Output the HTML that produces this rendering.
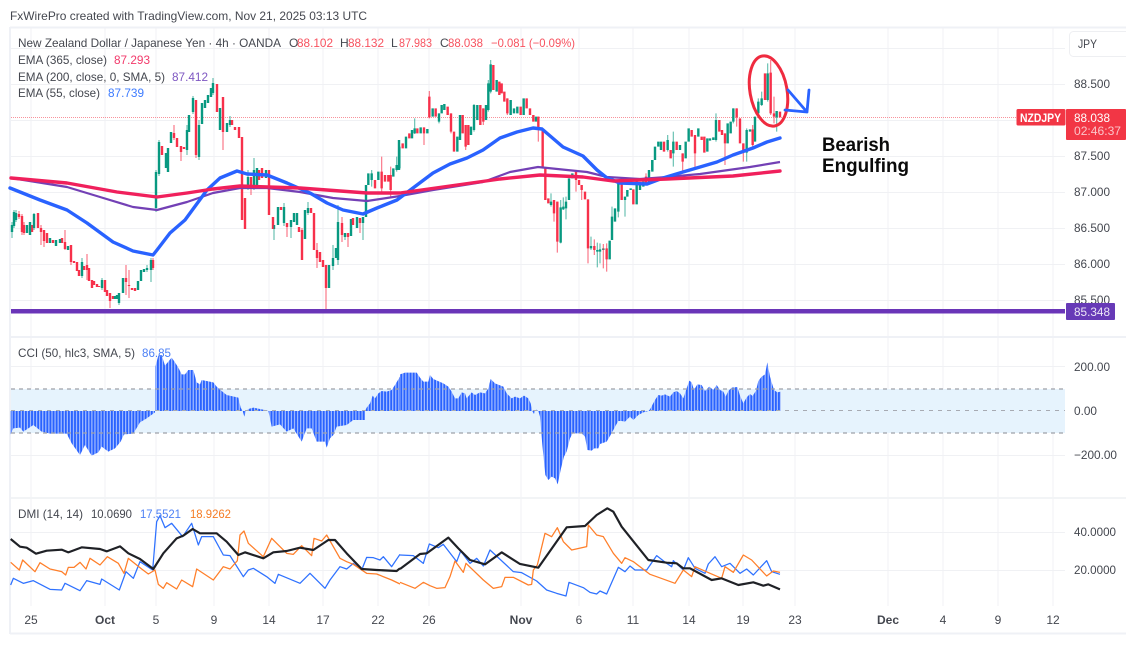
<!DOCTYPE html>
<html><head><meta charset="utf-8"><title>NZDJPY</title>
<style>
html,body{margin:0;padding:0;background:#fff}
svg{display:block;filter:blur(.35px)}
text{font-family:"Liberation Sans",sans-serif;font-size:12px;fill:#44474f}
.r{fill:#f7525f}
.rb{stroke:#f7314b;stroke-width:7.2;fill:none}
.gb{stroke:#089981;stroke-width:7.2;fill:none}
.rw{stroke:#f7314b;stroke-width:3.6;fill:none;opacity:.65}
.gw{stroke:#089981;stroke-width:3.6;fill:none;opacity:.6}
.rbp{stroke:#f7314b;stroke-width:2.4;fill:none}
.gbp{stroke:#089981;stroke-width:2.4;fill:none}
.rwp{stroke:#f7314b;stroke-width:1.2;fill:none;opacity:.65}
.gwp{stroke:#089981;stroke-width:1.2;fill:none;opacity:.6}
</style></head><body>
<svg width="1126" height="650" viewBox="0 0 1126 650" xmlns="http://www.w3.org/2000/svg">
<defs>
<pattern id="b" patternUnits="userSpaceOnUse" width="9.21" height="30"><rect width="9.21" height="30" fill="#b4c9ff"/><rect x="1" width="6" height="30" fill="#2962ff"/></pattern>
</defs>
<rect width="1126" height="650" fill="#fff"/>
<text x="10" y="20" textLength="357" lengthAdjust="spacingAndGlyphs">FxWirePro created with TradingView.com, Nov 21, 2025 03:13 UTC</text>

<!-- frame -->
<path d="M10 27.500H1126M10 27V634M10 337H1126M10 633.500H1126" stroke="#eff1f6" stroke-width="2" fill="none"/>
<path d="M11 498H1126" stroke="#e6e8ee" stroke-width="1"/>
<!-- grid -->
<path d="M31 28V336M105 28V336M156 28V336M214 28V336M269 28V336M323 28V336M378 28V336M429 28V336M521 28V336M579 28V336M633 28V336M689 28V336M743 28V336M795 28V336M888 28V336M943 28V336M998 28V336M1053 28V336
M31 338V497M105 338V497M156 338V497M214 338V497M269 338V497M323 338V497M378 338V497M429 338V497M521 338V497M579 338V497M633 338V497M689 338V497M743 338V497M795 338V497M888 338V497M943 338V497M998 338V497M1053 338V497
M31 499V606M105 499V606M156 499V606M214 499V606M269 499V606M323 499V606M378 499V606M429 499V606M521 499V606M579 499V606M633 499V606M689 499V606M743 499V606M795 499V606M888 499V606M943 499V606M998 499V606M1053 499V606
M11 48.500H1065M11 84.500H1065M11 120.500H1065M11 156.500H1065M11 192.500H1065M11 228.500H1065M11 264.500H1065M11 300.500H1065
M11 366.500H1065M11 455.500H1065M11 532.500H1065M11 570.500H1065" stroke="#f0f1f4" stroke-width="1" fill="none"/>

<!-- CCI band -->
<rect x="11" y="389" width="1054" height="44" fill="#e6f3fd"/>

<!-- CCI bars -->
<g transform="translate(0 335) scale(.33333)" fill="url(#b)">
<polygon points="32,228 32,298 40,280 60,278 70,290 100,270 125,290 150,296 200,296 215,325 240,360 255,330 275,362 295,352 305,335 325,350 345,340 362,320 372,298 400,296 420,262 440,250 465,232 465,228"/>
<polygon points="466,228 466,95 475,62 485,60 495,92 505,80 515,68 525,82 535,98 545,118 555,118 565,105 580,105 590,142 600,148 605,135 640,142 650,155 670,172 680,180 715,188 722,218 728,228"/>
<polygon points="728,228 733,245 738,228"/>
<polygon points="740,228 745,222 760,218 780,222 800,226 805,228"/>
<polygon points="805,228 810,250 815,275 840,268 860,290 880,280 905,320 920,280 935,280 950,320 975,320 980,338 990,310 1000,300 1010,275 1040,270 1060,255 1095,255 1095,228"/>
<polygon points="1095,228 1100,218 1110,205 1118,182 1125,190 1135,175 1145,168 1160,170 1175,165 1185,150 1200,125 1200,228"/>
</g>
<g transform="translate(400 335) scale(.33333)" fill="url(#b)">
<polygon points="0,228 0,118 15,113 50,113 60,128 70,140 85,140 90,120 100,132 130,145 145,155 155,170 165,190 175,190 185,172 195,175 200,190 215,172 225,180 240,172 255,175 265,160 272,132 285,145 310,155 320,175 335,190 345,185 360,190 372,182 385,190 392,205 397,228"/>
<polygon points="397,228 402,237 405,228 410,224 415,228"/>
<polygon points="415,228 420,245 427,330 436,420 445,435 455,425 465,430 473,448 483,400 492,365 500,350 510,310 518,295 545,295 555,305 562,345 575,347 583,340 595,340 600,327 620,320 630,303 640,285 647,272 655,258 665,258 675,260 690,245 700,255 715,240 730,232 745,228"/>
<polygon points="745,228 750,223 757,210 765,195 775,180 785,182 795,178 810,185 820,172 830,168 840,175 850,190 858,165 868,137 875,142 882,165 892,148 905,150 915,168 928,155 940,165 950,150 960,165 970,170 977,185 985,168 995,158 1012,156 1020,182 1030,205 1040,187 1050,177 1058,183 1068,167 1075,138 1085,125 1095,118 1102,82 1110,125 1122,165 1132,172 1142,170 1142,228"/>
</g>
<path d="M11 389H1065M11 433H1065" stroke="#9ea1a9" stroke-width="1.200" stroke-dasharray="4 4" fill="none"/>
<path d="M11 410.500H1065" stroke="#a7aab2" stroke-width="1" stroke-dasharray="4 5" fill="none"/>

<!-- price line -->
<path d="M11 117.500H1017" stroke="#f8929b" stroke-width="1" stroke-dasharray="1 1" fill="none"/>

<!-- Candles A: x 11-156 -->
<path class="rbp" d="M19 214V217M22 216V232M24 225V233M32 225V232M38 213V228M41 228V232M44 230V241M47 233V243M53 240V243M62 238V243M65 242V249M71 245V262M74 261V263M77 262V271M79 270V276M84 266V270M87 265V270M89 268V281M92 280V288M94 281V285M97 284V287M99 286V287M105 280V292M107 290V296M110 293V301M113 296V299M126 278V282M129 285V286M132 288V290M135 288V291M153 260V268"/>
<path class="gbp" d="M12 225V232M14 212V226M16 213V220M27 225V233M30 222V235M34 214V228M50 238V243M56 240V246M60 239V243M68 246V250M82 262V276M102 280V288M115 296V299M117 295V299M119 293V303M123 278V293M138 281V290M141 270V281M144 269V272M147 268V270M151 260V270"/>
<path class="rwp" d="M19 211V219M22 214V235M24 222V235M41 225V245M44 230V247M65 230V250M71 245V265M87 254V280M110 293V308M126 265V295M129 270V298M153 258V270"/>
<path class="gwp" d="M12 222V238M14 210V228M16 210V222M30 222V235M34 213V230M82 258V278M102 278V290M119 293V305M147 265V272M151 258V282"/>

<!-- Candles B: 156-366 -->
<path class="gbp" d="M156 172V208M159 142V174M166 153V168M168 148V172M171 132V143M187 130V150M189 115V132M193 98V112M199 125V157M202 103V124M205 100V108M208 95V103M211 88V97M213 83V93M220 108V130M227 123V132M230 120V125M248 177V187M254 170V187M257 168V187M266 170V178M274 225V229M278 207V225M284 207V223M291 220V227M294 213V222M297 213V225M305 210V239M308 208V213M329 265V288M333 258V266M336 248V258M338 222V260M345 233V237M351 219V236M357 217V228M363 217V223M366 185V217"/>
<path class="rbp" d="M162 146V155M174 133V138M177 138V147M181 146V152M184 147V149M196 100V155M217 84V112M223 97V132M232 120V125M235 127V130M239 127V138M242 137V220M245 198V229M251 177V187M259 170V180M262 168V178M269 170V215M273 217V229M281 207V210M287 223V227M299 227V232M302 230V260M311 208V213M314 213V250M317 250V258M320 252V262M323 260V267M326 265V288M342 223V235M348 233V237M353 218V225M360 218V223"/>
<path class="gwp" d="M156 170V212M159 140V176M187 125V155M193 96V114M199 120V160M213 78V95M230 116V127M248 170V190M254 158V190M274 225V240M284 203V226M291 220V238M308 202V215M333 245V270M338 205V265M345 233V240M363 217V240"/>
<path class="rwp" d="M174 125V140M181 146V161M196 100V158M223 97V150M251 177V195M287 223V237M302 228V260M317 243V268M326 265V311M342 217V242M348 233V247M360 218V233"/>

<!-- Candles C: zoom 1 coords x 366-400 -->
<g transform="scale(.33333)">
<path class="gb" d="M1105 520V555M1115 520V540M1135 515V540M1180 505V530M1190 495V510M1197 420V510"/>
<path class="rb" d="M1125 540V565M1145 515V565M1155 525V545M1165 525V545M1172 525V570"/>
<path class="rw" d="M1145 470V575M1172 500V595"/>
<path class="gw" d="M1115 510V560M1190 470V515"/>
</g>

<!-- Candles D: zoom 2 coords x 400-800 -->
<g transform="translate(400 30) scale(.33333)">
<path class="gb" d="M-2 350V415M18 320V355M36 300V325M44 295V310M62 292V310M82 297V310M98 235V260M117 250V275M125 225V250M133 222V240M172 320V365M180 255V330M213 290V315M222 225V300M232 225V270M258 225V270M265 160V240M272 103V185M290 150V185M332 210V255M342 235V250M352 230V250M371 205V255M408 260V275
M757 390V420M765 350V390M775 335V350M783 335V360M803 330V360M820 335V370M840 345V360M857 335V385M866 295V335M895 295V320M922 325V365M930 325V332M940 322V330M948 270V330M983 280V340M992 275V310M1000 235V275M1040 300V368M1050 298V305M1065 260V335M1075 215V250M1085 205V225M1103 130V210M1130 243V262"/>
<path class="rb" d="M8 340V355M28 310V325M52 295V310M72 292V310M88 200V262M107 235V260M143 230V255M153 250V305M162 305V365M188 255V310M197 285V350M205 285V345M241 225V285M250 235V275M280 105V180M298 155V195M305 160V190M313 185V215M322 205V250M362 230V255M380 205V235M390 235V255M400 255V275M415 260V300M428 300V415
M792 335V365M812 360V385M830 335V360M848 370V395M875 300V320M885 315V370M905 320V330M913 320V368M958 270V305M966 300V315M975 310V340M1010 235V262M1020 265V340M1030 340V368M1058 298V345M1095 130V210M1112 128V250M1122 250V260M1140 245V262"/>
<path class="rw" d="M72 292V345M88 183V265M153 250V310M197 285V360M250 235V285M322 205V255M415 260V335M848 370V430M885 315V415M975 310V405M1030 340V395M1112 90V255M1122 200V280M1010 235V290M1058 285V350"/>
<path class="gw" d="M44 265V312M117 250V280M222 222V305M272 90V190M265 150V245M803 315V365M820 305V410M1000 235V280M948 250V335M1085 185V228M1103 100V215M1130 243V305M1075 205V255M1040 295V395"/>
</g>

<!-- Candles E: zoom 5 coords -->
<g transform="translate(400 160) scale(.33333)">
<path class="rb" d="M436 25V120M445 115V130M462 120V160M472 125V245M528 35V60M537 60V75M545 75V90M555 95V118M564 118V265M583 258V270M620 265V298M665 70V120M700 88V133M738 50V70"/>
<path class="gb" d="M453 125V135M482 142V248M490 140V148M498 125V145M507 55V120M517 40V55M573 258V265M592 270V275M600 268V275M610 265V270M629 242V298M636 170V240M645 145V185M655 70V155M675 110V120M682 90V110M692 85V90M710 60V133M720 75V90M730 65V80M747 30V70M757 0V35"/>
<path class="rw" d="M462 120V185M472 125V278M528 30V95M545 75V120M564 118V310M583 238V285M620 250V335M610 252V325M738 40V75"/>
<path class="gw" d="M453 100V140M482 120V250M490 112V150M498 110V178M573 230V270M592 248V322M600 250V310M655 70V172M675 110V170M636 140V240"/>
</g>

<!-- EMA lines -->
<polyline fill="none" stroke="#7340b5" stroke-width="2.200" stroke-linejoin="round" points="11,178 67,187 100,197 133,207 157,210 187,202 213,193 240,188 267,188 300,192 333,198 367,201 400,196 433,190 483,182 510,172 538,167 567,170 587,172 607,177 640,179 667,177 700,174 750,167 780,162"/>
<polyline fill="none" stroke="#2962ff" stroke-width="3.400" stroke-linejoin="round" stroke-linecap="round" points="10,188 40,200 67,210 87,223 113,242 133,251 153,255 157,250 170,233 185,220 207,190 220,178 237,171 247,174 267,175 287,183 310,193 327,203 343,210 363,214 377,208 397,200 413,188 433,173 450,164 467,158 483,150 500,138 517,132 533,128 542,129 563,147 583,156 597,170 607,178 620,183 647,184 663,178 683,172 700,167 717,162 733,155 753,148 767,142 780,138"/>
<polyline fill="none" stroke="#f0205c" stroke-width="3.400" stroke-linejoin="round" stroke-linecap="round" points="11,178 67,183 117,192 157,197 187,193 213,189 240,186 300,188 367,193 400,193 450,186 500,179 540,175 583,177 613,181 667,179 733,176 780,171"/>

<!-- Annotation -->
<ellipse cx="768.500" cy="91" rx="18.500" ry="35.500" transform="rotate(-10 768.500 91)" fill="none" stroke="#ef2b3f" stroke-width="3"/>
<path d="M788 90L807 112M785 110L807 112M809 90L807 112" fill="none" stroke="#2962ff" stroke-width="2.800" stroke-linecap="round"/>
<text x="822" y="151" textLength="68" lengthAdjust="spacingAndGlyphs" style="font-size:19px;font-weight:bold;fill:#0a0a0a">Bearish</text>
<text x="822" y="172" textLength="87" lengthAdjust="spacingAndGlyphs" style="font-size:19px;font-weight:bold;fill:#0a0a0a">Engulfing</text>

<!-- Horizontal support -->
<rect x="11" y="309" width="1054" height="4.500" fill="#6a35b8"/>

<!-- DMI -->
<g transform="translate(0 495) scale(.33333)" fill="none" stroke-linejoin="round">
<polyline stroke="#2f72ff" stroke-width="3.800" points="32,270 40,250 70,265 100,257 150,283 185,285 195,265 240,287 260,257 300,268 305,252 358,285 378,230 400,250 420,200 458,225 470,80 480,62 495,98 515,85 548,125 575,85 595,150 605,125 640,125 670,180 690,182 730,245 745,225 760,220 800,245 825,265 835,238 900,265 930,235 975,280 990,255 1020,215 1040,222 1060,205 1085,225 1100,187 1120,188 1140,195 1150,185 1175,215 1200,178"/>
<polyline stroke="#ff7f2a" stroke-width="3.800" points="32,202 58,225 68,195 105,230 120,203 150,222 185,230 197,240 205,217 222,217 240,202 258,222 270,190 300,210 322,185 355,205 372,235 385,190 425,222 445,237 465,225 475,268 490,280 500,263 530,282 545,255 578,275 590,222 640,255 655,235 670,215 690,222 712,197 720,120 732,108 745,145 790,185 815,130 860,175 880,178 905,152 935,182 942,130 965,138 980,120 1020,190 1040,200 1060,208 1100,235 1130,237 1175,255 1200,267"/>
<polyline stroke="#1f2126" stroke-width="6.500" points="32,132 60,155 80,158 108,176 140,167 185,164 205,172 245,157 300,162 320,169 360,154 385,175 420,192 460,222 490,175 530,130 550,122 578,102 600,115 650,115 680,140 715,180 735,172 790,190 820,172 860,168 900,158 940,165 985,135 1005,135 1040,175 1085,222 1130,225 1190,228 1200,220"/>
</g>
<g transform="translate(400 495) scale(.33333)" fill="none" stroke-linejoin="round">
<polyline stroke="#2f72ff" stroke-width="3.800" points="0,180 40,182 70,205 88,147 115,158 130,148 170,200 182,168 210,205 230,190 250,213 270,165 340,230 365,233 410,258 440,285 470,295 498,303 507,262 550,278 570,292 590,297 600,288 620,297 655,217 675,230 690,213 705,225 740,225 770,182 800,205 815,215 820,197 850,225 865,188 885,220 915,235 925,207 945,185 965,215 990,205 1020,235 1040,222 1060,240 1100,197 1115,230 1140,238"/>
<polyline stroke="#ff7f2a" stroke-width="3.800" points="0,262 45,280 70,262 90,272 110,280 135,278 150,245 165,198 190,232 198,205 250,255 280,280 305,275 315,247 340,247 385,270 395,268 400,225 412,210 435,115 455,125 472,98 490,140 515,165 560,155 565,90 590,120 610,125 640,175 665,205 675,188 700,200 750,238 770,245 825,265 850,225 875,245 885,215 930,235 965,250 975,215 1000,232 1030,180 1055,195 1100,243 1120,228 1140,232"/>
<polyline stroke="#1f2126" stroke-width="6.500" points="0,222 60,177 80,175 145,128 175,160 210,195 255,208 305,172 360,207 415,218 500,97 555,93 590,60 622,40 640,50 665,95 745,195 800,203 830,205 850,220 870,220 935,255 965,250 1015,270 1060,262 1090,272 1105,268 1140,283"/>
</g>

<!-- Legends -->
<text x="18" y="47" textLength="263" lengthAdjust="spacingAndGlyphs">New Zealand Dollar / Japanese Yen · 4h · OANDA</text>
<text x="289" y="47">O</text><text x="297" y="47" class="r" textLength="36" lengthAdjust="spacingAndGlyphs">88.102</text>
<text x="340" y="47">H</text><text x="348" y="47" class="r" textLength="36" lengthAdjust="spacingAndGlyphs">88.132</text>
<text x="391" y="47">L</text><text x="399" y="47" class="r" textLength="33" lengthAdjust="spacingAndGlyphs">87.983</text>
<text x="440" y="47">C</text><text x="448" y="47" class="r" textLength="35" lengthAdjust="spacingAndGlyphs">88.038</text>
<text x="491" y="47" class="r" textLength="84" lengthAdjust="spacingAndGlyphs">−0.081 (−0.09%)</text>

<text x="18" y="64" textLength="89" lengthAdjust="spacingAndGlyphs">EMA (365, close)</text>
<text x="114" y="64" textLength="36" lengthAdjust="spacingAndGlyphs" style="fill:#f23a6b">87.293</text>
<text x="18" y="81" textLength="147" lengthAdjust="spacingAndGlyphs">EMA (200, close, 0, SMA, 5)</text>
<text x="172" y="81" textLength="36" lengthAdjust="spacingAndGlyphs" style="fill:#7e57c2">87.412</text>
<text x="18" y="97" textLength="82" lengthAdjust="spacingAndGlyphs">EMA (55, close)</text>
<text x="108" y="97" textLength="36" lengthAdjust="spacingAndGlyphs" style="fill:#3d7bff">87.739</text>

<text x="18" y="357" textLength="117" lengthAdjust="spacingAndGlyphs">CCI (50, hlc3, SMA, 5)</text>
<text x="142" y="357" textLength="29" lengthAdjust="spacingAndGlyphs" style="fill:#4d80f5">86.85</text>
<text x="18" y="518" textLength="65" lengthAdjust="spacingAndGlyphs">DMI (14, 14)</text>
<text x="91" y="518" textLength="41" lengthAdjust="spacingAndGlyphs">10.0690</text>
<text x="140" y="518" textLength="41" lengthAdjust="spacingAndGlyphs" style="fill:#4d80f5">17.5521</text>
<text x="190" y="518" textLength="41" lengthAdjust="spacingAndGlyphs" style="fill:#f57c24">18.9262</text>

<!-- JPY box -->
<rect x="1069.500" y="31.500" width="60" height="25" rx="4" fill="#fff" stroke="#eeeff2"/>
<text x="1078" y="48" textLength="19" lengthAdjust="spacingAndGlyphs">JPY</text>

<!-- Price axis -->
<text x="1074" y="88" textLength="36" lengthAdjust="spacingAndGlyphs">88.500</text>
<text x="1074" y="160" textLength="36" lengthAdjust="spacingAndGlyphs">87.500</text>
<text x="1074" y="196" textLength="36" lengthAdjust="spacingAndGlyphs">87.000</text>
<text x="1074" y="232" textLength="36" lengthAdjust="spacingAndGlyphs">86.500</text>
<text x="1074" y="268" textLength="36" lengthAdjust="spacingAndGlyphs">86.000</text>
<text x="1074" y="304" textLength="36" lengthAdjust="spacingAndGlyphs">85.500</text>

<rect x="1016.500" y="109" width="49" height="16.500" rx="1.500" fill="#f23645"/>
<text x="1020" y="122" textLength="41" lengthAdjust="spacingAndGlyphs" style="fill:#fff;font-weight:bold;font-size:11.500px">NZDJPY</text>
<rect x="1066" y="109" width="60" height="31" rx="1" fill="#f23645"/>
<text x="1074" y="122" textLength="36" lengthAdjust="spacingAndGlyphs" style="fill:#fff">88.038</text>
<text x="1074" y="135" textLength="47" lengthAdjust="spacingAndGlyphs" style="fill:#fbc4c9">02:46:37</text>

<rect x="1066" y="303" width="49" height="17" rx="1" fill="#673ab7"/>
<text x="1074" y="316" textLength="36" lengthAdjust="spacingAndGlyphs" style="fill:#ece6f6">85.348</text>

<text x="1074" y="371" textLength="36" lengthAdjust="spacingAndGlyphs">200.00</text>
<text x="1074" y="415" textLength="23" lengthAdjust="spacingAndGlyphs">0.00</text>
<text x="1074" y="459" textLength="43" lengthAdjust="spacingAndGlyphs">−200.00</text>
<text x="1074" y="536" textLength="42" lengthAdjust="spacingAndGlyphs">40.0000</text>
<text x="1074" y="574" textLength="42" lengthAdjust="spacingAndGlyphs">20.0000</text>

<!-- Time axis -->
<g text-anchor="middle">
<text x="31" y="624">25</text><text x="105" y="624" style="font-weight:bold">Oct</text><text x="156" y="624">5</text><text x="214" y="624">9</text><text x="269" y="624">14</text><text x="323" y="624">17</text><text x="378" y="624">22</text><text x="429" y="624">26</text><text x="521" y="624" style="font-weight:bold">Nov</text><text x="579" y="624">6</text><text x="633" y="624">11</text><text x="689" y="624">14</text><text x="743" y="624">19</text><text x="795" y="624">23</text><text x="888" y="624" style="font-weight:bold">Dec</text><text x="943" y="624">4</text><text x="998" y="624">9</text><text x="1053" y="624">12</text>
</g>
</svg>
</body></html>
